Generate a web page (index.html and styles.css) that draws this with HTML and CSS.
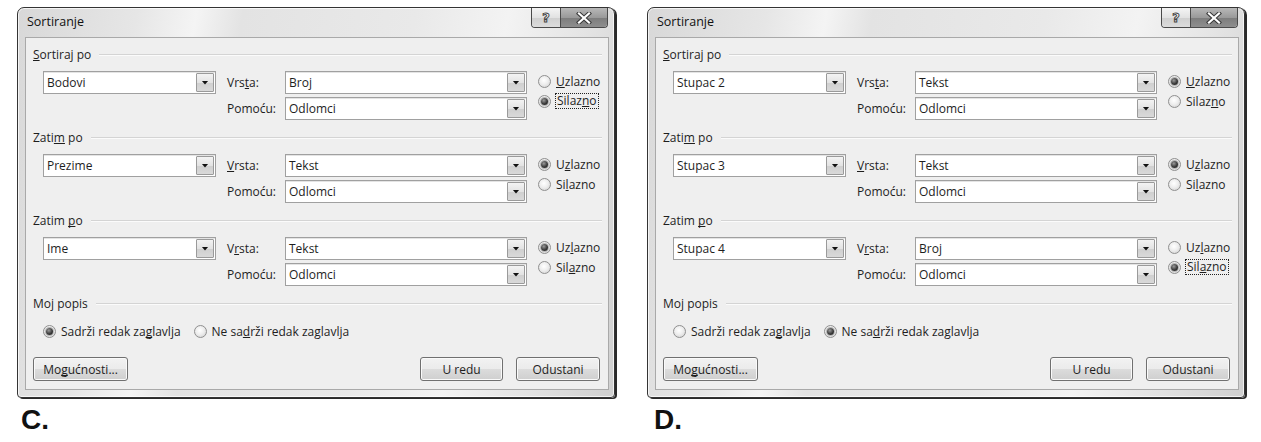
FILE: index.html
```html
<!DOCTYPE html>
<html lang="hr">
<head>
<meta charset="utf-8">
<title>Sortiranje</title>
<link rel="stylesheet" href="styles.css">
</head>
<body>
<div class="page">
  <figure class="shot shot-c">
    <div class="dialog">
      <div class="titlebar">
        <span class="title">Sortiranje</span>
        <div class="caption-btns">
          <span class="cbtn help">?</span>
          <span class="cbtn close"><svg width="18" height="12" viewBox="0 0 18 12"><path d="M4 1.5L14 10.5M14 1.5L4 10.5" stroke="#3a3a3a" stroke-width="4.2" stroke-linecap="square"/><path d="M4 1.5L14 10.5M14 1.5L4 10.5" stroke="#ffffff" stroke-width="2.2" stroke-linecap="square"/></svg></span>
        </div>
      </div>
      <div class="client">
        <section class="group">
          <div class="group-head"><span><u>S</u>ortiraj po</span><i class="rule"></i></div>
          <div class="group-body">
            <div class="combo key"><span class="val">Bodovi</span><i class="drop"></i></div>
            <span class="lbl">Vrs<u>t</u>a:</span>
            <div class="combo wide"><span class="val">Broj</span><i class="drop"></i></div>
            <div class="radios">
              <label class="radio"><i class="rb"></i><span><u>U</u>zlazno</span></label>
              <label class="radio"><i class="rb on"></i><span class="focus">Silaz<u>n</u>o</span></label>
            </div>
            <span class="lbl">Pomoću:</span>
            <div class="combo wide"><span class="val">Odlomci</span><i class="drop"></i></div>
          </div>
        </section>
        <section class="group">
          <div class="group-head"><span>Zati<u>m</u> po</span><i class="rule"></i></div>
          <div class="group-body">
            <div class="combo key"><span class="val">Prezime</span><i class="drop"></i></div>
            <span class="lbl"><u>V</u>rsta:</span>
            <div class="combo wide"><span class="val">Tekst</span><i class="drop"></i></div>
            <div class="radios">
              <label class="radio"><i class="rb on"></i><span>U<u>z</u>lazno</span></label>
              <label class="radio"><i class="rb"></i><span>Si<u>l</u>azno</span></label>
            </div>
            <span class="lbl">Pomoću:</span>
            <div class="combo wide"><span class="val">Odlomci</span><i class="drop"></i></div>
          </div>
        </section>
        <section class="group">
          <div class="group-head"><span>Zatim <u>p</u>o</span><i class="rule"></i></div>
          <div class="group-body">
            <div class="combo key"><span class="val">Ime</span><i class="drop"></i></div>
            <span class="lbl">V<u>r</u>sta:</span>
            <div class="combo wide"><span class="val">Tekst</span><i class="drop"></i></div>
            <div class="radios">
              <label class="radio"><i class="rb on"></i><span>Uz<u>l</u>azno</span></label>
              <label class="radio"><i class="rb"></i><span>Sil<u>a</u>zno</span></label>
            </div>
            <span class="lbl">Pomoću:</span>
            <div class="combo wide"><span class="val">Odlomci</span><i class="drop"></i></div>
          </div>
        </section>
        <section class="group last">
          <div class="group-head"><span>Moj popis</span><i class="rule"></i></div>
          <div class="header-row">
            <label class="radio"><i class="rb on"></i><span>Sadrži redak za<u>g</u>lavlja</span></label>
            <label class="radio"><i class="rb"></i><span>Ne sa<u>d</u>rži redak zaglavlja</span></label>
          </div>
        </section>
        <div class="btn-row">
          <button class="btn opts">Mo<u>g</u>ućnosti...</button>
          <div class="btn-group">
            <button class="btn ok">U redu</button>
            <button class="btn cancel">Odustani</button>
          </div>
        </div>
      </div>
    </div>
    <figcaption class="tag">C.</figcaption>
  </figure>

  <figure class="shot shot-d">
    <div class="dialog">
      <div class="titlebar">
        <span class="title">Sortiranje</span>
        <div class="caption-btns">
          <span class="cbtn help">?</span>
          <span class="cbtn close"><svg width="18" height="12" viewBox="0 0 18 12"><path d="M4 1.5L14 10.5M14 1.5L4 10.5" stroke="#3a3a3a" stroke-width="4.2" stroke-linecap="square"/><path d="M4 1.5L14 10.5M14 1.5L4 10.5" stroke="#ffffff" stroke-width="2.2" stroke-linecap="square"/></svg></span>
        </div>
      </div>
      <div class="client">
        <section class="group">
          <div class="group-head"><span><u>S</u>ortiraj po</span><i class="rule"></i></div>
          <div class="group-body">
            <div class="combo key"><span class="val">Stupac 2</span><i class="drop"></i></div>
            <span class="lbl">Vrs<u>t</u>a:</span>
            <div class="combo wide"><span class="val">Tekst</span><i class="drop"></i></div>
            <div class="radios">
              <label class="radio"><i class="rb on"></i><span><u>U</u>zlazno</span></label>
              <label class="radio"><i class="rb"></i><span>Silaz<u>n</u>o</span></label>
            </div>
            <span class="lbl">Pomoću:</span>
            <div class="combo wide"><span class="val">Odlomci</span><i class="drop"></i></div>
          </div>
        </section>
        <section class="group">
          <div class="group-head"><span>Zati<u>m</u> po</span><i class="rule"></i></div>
          <div class="group-body">
            <div class="combo key"><span class="val">Stupac 3</span><i class="drop"></i></div>
            <span class="lbl"><u>V</u>rsta:</span>
            <div class="combo wide"><span class="val">Tekst</span><i class="drop"></i></div>
            <div class="radios">
              <label class="radio"><i class="rb on"></i><span>U<u>z</u>lazno</span></label>
              <label class="radio"><i class="rb"></i><span>Si<u>l</u>azno</span></label>
            </div>
            <span class="lbl">Pomoću:</span>
            <div class="combo wide"><span class="val">Odlomci</span><i class="drop"></i></div>
          </div>
        </section>
        <section class="group">
          <div class="group-head"><span>Zatim <u>p</u>o</span><i class="rule"></i></div>
          <div class="group-body">
            <div class="combo key"><span class="val">Stupac 4</span><i class="drop"></i></div>
            <span class="lbl">V<u>r</u>sta:</span>
            <div class="combo wide"><span class="val">Broj</span><i class="drop"></i></div>
            <div class="radios">
              <label class="radio"><i class="rb"></i><span>Uz<u>l</u>azno</span></label>
              <label class="radio"><i class="rb on"></i><span class="focus">Sil<u>a</u>zno</span></label>
            </div>
            <span class="lbl">Pomoću:</span>
            <div class="combo wide"><span class="val">Odlomci</span><i class="drop"></i></div>
          </div>
        </section>
        <section class="group last">
          <div class="group-head"><span>Moj popis</span><i class="rule"></i></div>
          <div class="header-row">
            <label class="radio"><i class="rb"></i><span>Sadrži redak za<u>g</u>lavlja</span></label>
            <label class="radio"><i class="rb on"></i><span>Ne sa<u>d</u>rži redak zaglavlja</span></label>
          </div>
        </section>
        <div class="btn-row">
          <button class="btn opts">Mo<u>g</u>ućnosti...</button>
          <div class="btn-group">
            <button class="btn ok">U redu</button>
            <button class="btn cancel">Odustani</button>
          </div>
        </div>
      </div>
    </div>
    <figcaption class="tag">D.</figcaption>
  </figure>
</div>
</body>
</html>
```

FILE: styles.css
```css
* { box-sizing: border-box; }
html, body { margin: 0; padding: 0; background: #ffffff; }
body {
  width: 1261px;
  height: 442px;
  overflow: hidden;
  font-family: "Open Sans", "Liberation Sans", sans-serif;
  font-size: 12px;
  color: #1e1e1e;
}
u {
  text-decoration: underline;
  text-underline-offset: 1px;
  text-decoration-thickness: 1px;
  text-decoration-skip-ink: none;
}

.page { display: flex; align-items: flex-start; padding-top: 7px; }
.shot { margin: 0; display: flex; flex-direction: column; }
.shot-c { margin-left: 17px; }
.shot-d { margin-left: 32px; }

.dialog {
  width: 598px;
  height: 391px;
  border: 1px solid #343434;
  border-radius: 7px 7px 4px 4px;
  padding: 0 5px 7px 7px;
  display: flex;
  flex-direction: column;
  background:
    linear-gradient(100deg, #d8d8d8 0%, #e6e6e6 18%, #f4f4f4 27%, #e3e3e3 34%, #e9e9e9 60%, #f3f3f3 74%, #e4e4e4 86%, #cfcfcf 100%);
  box-shadow: inset 0 0 0 1px rgba(255,255,255,0.7), 2px 1px 0 #2a2a2a;
}

.titlebar { height: 29px; display: flex; align-items: flex-start; justify-content: space-between; }
.title { padding: 5px 0 0 2px; line-height: 18px; font-size: 12.5px; color: #111; }
.caption-btns {
  display: flex;
  margin-right: 1px;
  border: 1px solid #4a4a4a;
  border-top: none;
  border-radius: 0 0 4px 4px;
  overflow: hidden;
  height: 20px;
}
.cbtn { display: flex; align-items: center; justify-content: center; height: 19px; }
.help {
  width: 29px;
  border-right: 1px solid #4a4a4a;
  background: linear-gradient(#f4f4f4, #e2e2e2 50%, #cfcfcf 51%, #dcdcdc);
  font-family: "DejaVu Sans", sans-serif;
  font-weight: bold;
  font-size: 13px;
  color: #ffffff;
  -webkit-text-stroke: 1px #444;
}
.close {
  width: 46px;
  background: linear-gradient(#b8b8b8, #9a9a9a 50%, #7c7c7c 51%, #8e8e8e);
}

.client {
  flex: 1;
  background: #efefef;
  border: 1px solid #a9a9a9;
  padding: 9px 6px 8px 7px;
  display: flex;
  flex-direction: column;
}

.group { margin-bottom: 10px; }
.group.last { margin-bottom: 0; }
.group-head { height: 16px; display: flex; align-items: center; gap: 8px; line-height: 16px; color: #1e1e1e; }
.rule { flex: 1; height: 2px; border-top: 1px solid #d4d4d4; border-bottom: 1px solid #fbfbfb; }

.group-body {
  margin-top: 8px;
  padding-left: 10px;
  display: grid;
  grid-template-columns: 173px 47px 242px auto;
  grid-template-rows: 23px 23px;
  column-gap: 11px;
  row-gap: 3px;
  align-items: center;
}
.group-body .radios { grid-column: 4; grid-row: 1 / span 2; align-self: start; }
.group-body .key { grid-column: 1; grid-row: 1; }
.lbl { grid-column: 2; white-space: nowrap; }
.wide { grid-column: 3; }

.combo {
  height: 23px;
  background: #ffffff;
  border: 1px solid #a0a0a0;
  display: flex;
  align-items: center;
  padding-left: 3px;
  box-shadow: inset 0 1px 0 #e4e4e4;
}
.combo .val { flex: 1; white-space: nowrap; }
.drop {
  width: 18px;
  height: 19px;
  margin-right: 1px;
  border: 1px solid #9a9a9a;
  border-radius: 1px;
  background: linear-gradient(#f3f3f3, #e3e3e3 50%, #cfcfcf 51%, #d9d9d9);
  display: flex;
  align-items: center;
  justify-content: center;
}
.drop::after {
  content: "";
  width: 7px;
  height: 4px;
  background: #111;
  clip-path: polygon(0 0, 100% 0, 50% 100%);
}

.radios { display: flex; flex-direction: column; }
.radio { display: inline-flex; align-items: center; gap: 5px; height: 20px; white-space: nowrap; }
.rb {
  width: 13px;
  height: 13px;
  border-radius: 50%;
  border: 1px solid #909090;
  background: radial-gradient(circle at 45% 40%, #ffffff 0, #eeeeee 45%, #cdcdcd 100%);
  display: flex;
  align-items: center;
  justify-content: center;
  flex: none;
}
.rb.on::after {
  content: "";
  width: 7px;
  height: 7px;
  border-radius: 50%;
  background: radial-gradient(circle at 40% 35%, #9a9a9a 0, #3a3a3a 55%, #1a1a1a 100%);
  box-shadow: 0 0 0 1px #b5b5b5;
}
.focus { outline: 1px dotted #222; outline-offset: 0; padding: 0 1px; line-height: 14px; }

.header-row { margin-top: 9px; padding-left: 10px; display: flex; gap: 13px; }

.btn-row { margin-top: auto; display: flex; justify-content: space-between; padding-right: 2px; }
.btn-group { display: flex; gap: 13px; }
.btn {
  height: 24px;
  border: 1px solid #707070;
  border-radius: 3px;
  background: linear-gradient(#f2f2f2 0%, #ebebeb 49%, #dcdcdc 50%, #cfcfcf 100%);
  box-shadow: inset 0 0 0 1px #fafafa;
  font-family: inherit;
  font-size: 12px;
  color: #1e1e1e;
  padding: 0;
}
.opts { width: 95px; }
.ok { width: 83px; }
.cancel { width: 84px; }

.tag {
  margin-top: 6px;
  padding-left: 4px;
  font-family: "Liberation Sans", Arial, sans-serif;
  font-weight: bold;
  font-size: 28px;
  line-height: 32px;
  color: #111;
}
.shot-d .tag { padding-left: 7px; }
```
